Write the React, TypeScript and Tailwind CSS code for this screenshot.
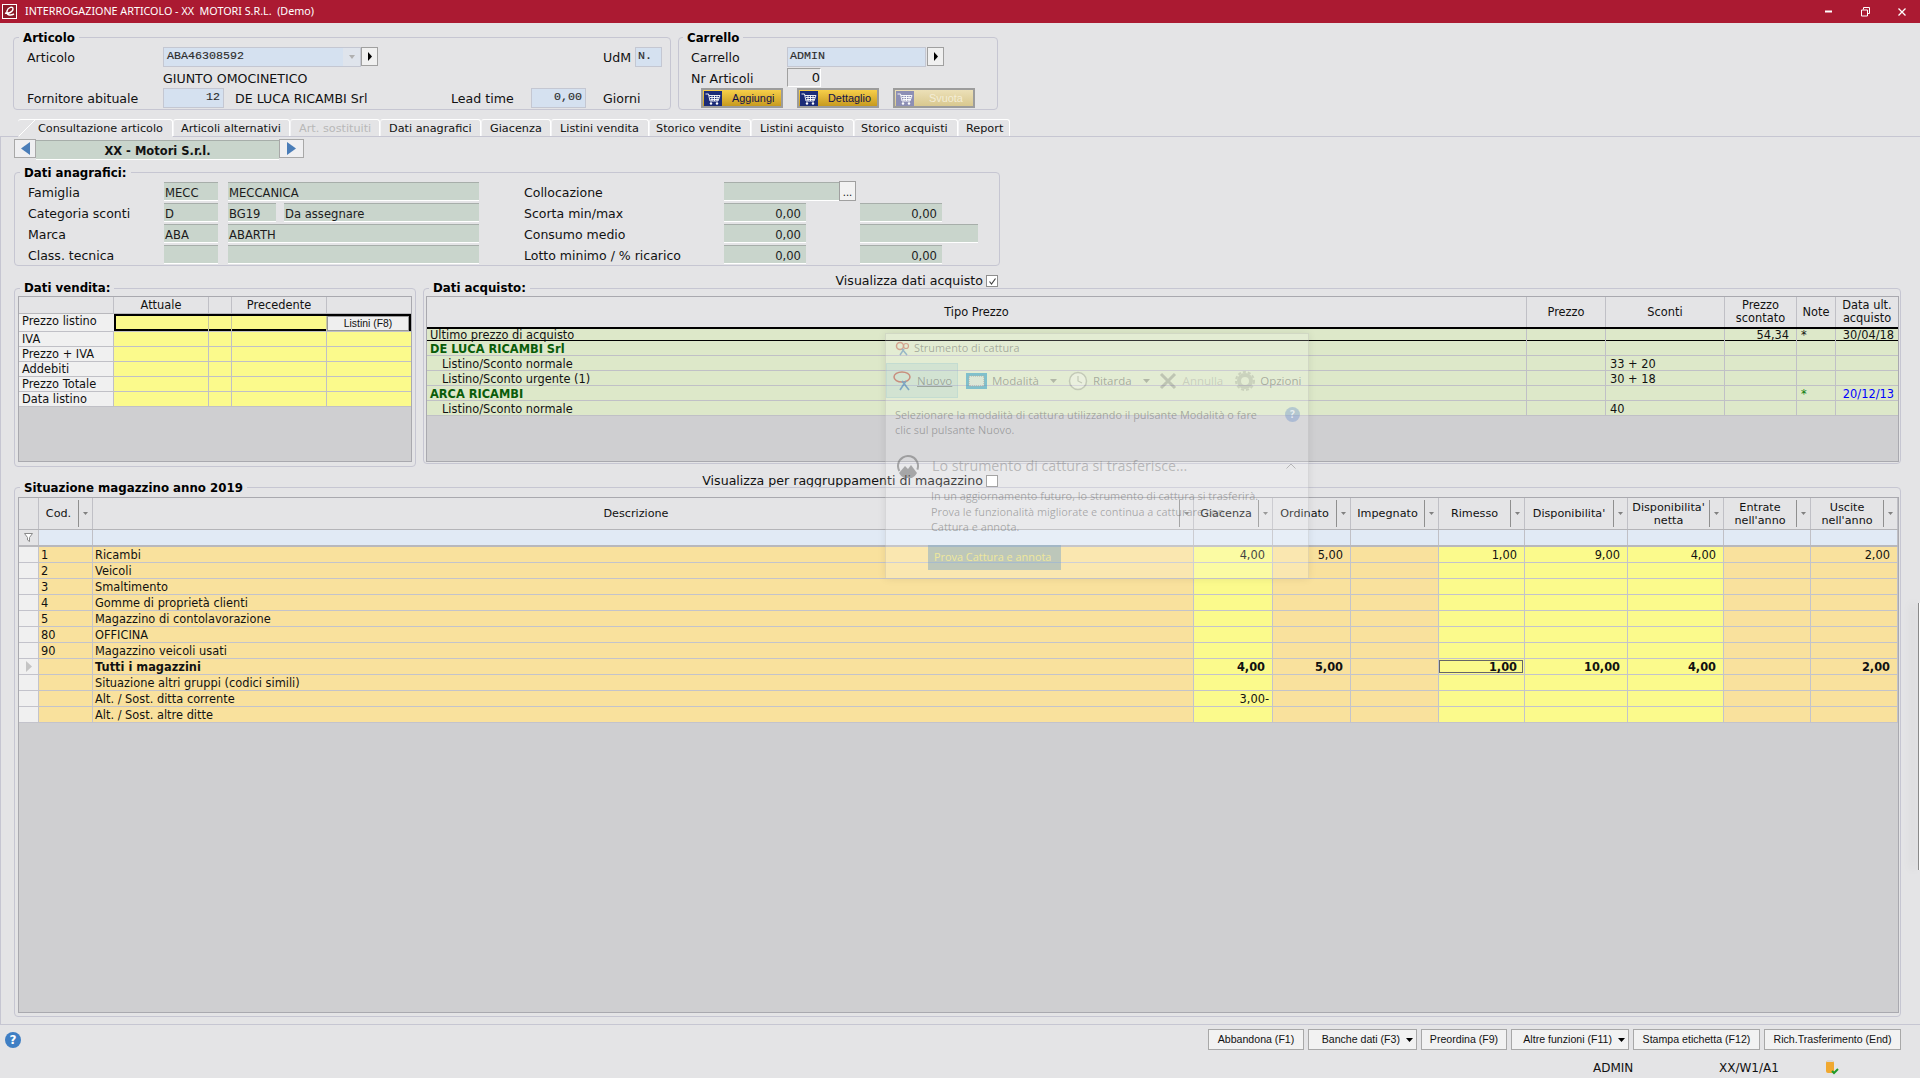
import React from "react";

function Group({ title, className, legend = "-top-[8px] left-[5px]", children }: { title: string; className: string; legend?: string; children?: React.ReactNode }) {
  return (
    <div className={`relative shrink-0 rounded-[4px] border border-[#c6c6d2] ${className}`}>
      <span className={`absolute ${legend} bg-[#e4e4e6] px-[4px] text-[11.8px] font-bold leading-[16px] text-black`}>{title}</span>
      {children}
    </div>
  );
}

function Mono({ w, children, right }: { w: string; children?: React.ReactNode; right?: boolean }) {
  return (
    <div className={`flex h-[20px] shrink-0 items-center border border-[#c4c7d2] bg-[#d5e1f0] px-[2px] font-['Liberation_Mono'] text-[11.67px] text-[#2a2a2a] [-webkit-text-stroke:0.15px_#333] ${w} ${right ? "justify-end pr-[3px]" : ""}`}>
      {children}
    </div>
  );
}

function Arrow() {
  return (
    <div className="flex h-[19px] w-[17px] shrink-0 items-center justify-center border border-[#a0a0a0] bg-[#f0f0f0]">
      <svg width="6" height="9" viewBox="0 0 6 9"><path d="M1 0l4 4.5L1 9z" fill="#000" /></svg>
    </div>
  );
}

function Cart({ faded }: { faded?: boolean }) {
  const c = faded ? "#8d8fb5" : "#1c2c78";
  return (
    <svg width="18" height="15" viewBox="0 0 18 15" className="ml-[1px] shrink-0">
      <rect x="0" y="0" width="18" height="15" fill={c} />
      <path d="M1.5 3h3l1.5 7h8l2-5.5H5M6 6.5h9M6.5 8.5h8M8 4.5v5.5M10.5 4.5v5.5M13 4.5v5.5" stroke="#fff" strokeWidth="0.9" fill="none" />
      <circle cx="7" cy="12.5" r="1.2" fill="#fff" />
      <circle cx="13" cy="12.5" r="1.2" fill="#fff" />
    </svg>
  );
}

function CartBtn({ label, disabled }: { label: string; disabled?: boolean }) {
  return (
    <div className={`flex h-[20px] w-[82px] shrink-0 items-center border-2 border-[#9c9c9c] font-['Liberation_Sans'] text-[10.9px] ${disabled ? "bg-gradient-to-b from-[#ece0b8] to-[#d9c88f] text-[#f4edd6]" : "bg-gradient-to-b from-[#f7cf49] to-[#c79a1e] text-[#10104a]"}`}>
      <Cart faded={disabled} />
      <span className={disabled ? "ml-[15px]" : "ml-[10px]"}>{label}</span>
    </div>
  );
}

function Ana({ w, children, right }: { w: string; children?: React.ReactNode; right?: boolean }) {
  return (
    <div className={`flex h-[19px] shrink-0 items-center border-t border-b border-t-[#a7aeaa] border-b-white bg-[#c9d5cc] px-[1px] pt-[2px] text-[11.6px] leading-[14px] text-[#1c1c1c] ${w} ${right ? "justify-end pr-[5px]" : ""}`}>
      {children}
    </div>
  );
}

function AnaRow({ label, label2, children }: { label: string; label2: string; children: React.ReactNode[] }) {
  return (
    <div className="flex h-[21px] items-start pl-[13px]">
      <span className="w-[136px] shrink-0 text-[12.5px] leading-[21px]">{label}</span>
      {children[0]}
      <span className="ml-[45px] w-[200px] shrink-0 text-[12.5px] leading-[21px]">{label2}</span>
      {children[1]}
    </div>
  );
}

function Check({ checked }: { checked?: boolean }) {
  return (
    <div className="ml-[3px] flex h-[12px] w-[12px] shrink-0 items-center justify-center border border-[#8e8e8e] bg-white">
      {checked && <svg width="9" height="9" viewBox="0 0 9 9"><path d="M1.5 4.5l2 2.5L7.5 1.5" stroke="#444" strokeWidth="1.2" fill="none" /></svg>}
    </div>
  );
}

const tabs: [string, string, string?][] = [
  ["Consultazione articolo", "w-[155px] pl-[20px]"],
  ["Articoli alternativi", "w-[117px] pl-[7px]"],
  ["Art. sostituiti", "w-[90px] pl-[8px]", "off"],
  ["Dati anagrafici", "w-[101px] pl-[8px]"],
  ["Giacenza", "w-[70px] pl-[8px]"],
  ["Listini vendita", "w-[98px] pl-[8px]"],
  ["Storico vendite", "w-[102px] pl-[6px]"],
  ["Listini acquisto", "w-[103px] pl-[8px]"],
  ["Storico acquisti", "w-[104px] pl-[6px]"],
  ["Report", "w-[52px] pl-[7px]"],
];

const venditaRows = ["IVA", "Prezzo + IVA", "Addebiti", "Prezzo Totale", "Data listino"];

const acqCols = "grid grid-cols-[1100px_79px_119px_72px_39px_62px] leading-[13px]";
const acqRows: { t: string; kind: string; sc?: string; star?: boolean; date?: string }[] = [
  { t: "DE LUCA RICAMBI Srl", kind: "head" },
  { t: "Listino/Sconto normale", kind: "sub", sc: "33 + 20" },
  { t: "Listino/Sconto urgente (1)", kind: "sub", sc: "30 + 18" },
  { t: "ARCA RICAMBI", kind: "head", star: true, date: "20/12/13" },
  { t: "Listino/Sconto normale", kind: "sub", sc: "40" },
];

const magCols = "grid grid-cols-[20px_54px_1101px_79px_78px_88px_86px_103px_96px_87px_87px] leading-[14px]";
const magHead: [string, string?][] = [
  ["Giacenza"], ["Ordinato"], ["Impegnato"], ["Rimesso"], ["Disponibilita'"], ["Disponibilita'", "netta"], ["Entrate", "nell'anno"], ["Uscite", "nell'anno"],
];
const yellow = [true, false, false, true, true, true, false, false];
const e = ["", "", "", "", "", "", "", ""];
const magRows: { c: string; d: string; v: string[]; b?: boolean }[] = [
  { c: "1", d: "Ricambi", v: ["4,00", "5,00", "", "1,00", "9,00", "4,00", "", "2,00"] },
  { c: "2", d: "Veicoli", v: e },
  { c: "3", d: "Smaltimento", v: e },
  { c: "4", d: "Gomme di proprietà clienti", v: e },
  { c: "5", d: "Magazzino di contolavorazione", v: e },
  { c: "80", d: "OFFICINA", v: e },
  { c: "90", d: "Magazzino veicoli usati", v: e },
  { c: "", d: "Tutti i magazzini", v: ["4,00", "5,00", "", "1,00", "10,00", "4,00", "", "2,00"], b: true },
  { c: "", d: "Situazione altri gruppi (codici simili)", v: e },
  { c: "", d: "Alt. / Sost. ditta corrente", v: ["3,00-", "", "", "", "", "", "", ""] },
  { c: "", d: "Alt. / Sost. altre ditte", v: e },
];

function Drop() {
  return <svg width="5" height="3" viewBox="0 0 5 3" className="shrink-0"><path d="M0 0h5L2.5 3z" fill="#808080" /></svg>;
}

function MagHead({ l1, l2 }: { l1: string; l2?: string }) {
  return (
    <div className="flex items-stretch border-r border-[#c0c0c6]">
      <div className="flex flex-1 flex-col items-center justify-center text-[11.2px] leading-[13px]">
        <span>{l1}</span>
        {l2 && <span>{l2}</span>}
      </div>
      <div className="my-[2px] w-px bg-[#8f8f8f]" />
      <div className="flex w-[13px] items-center justify-center"><Drop /></div>
    </div>
  );
}

const bottomBtns: [string, string, boolean?][] = [
  ["Abbandona (F1)", "w-[96px] justify-center"],
  ["Banche dati (F3)", "w-[109px] justify-end pr-[3px]", true],
  ["Preordina (F9)", "w-[86px] justify-center"],
  ["Altre funzioni (F11)", "w-[118px] justify-end pr-[3px]", true],
  ["Stampa etichetta (F12)", "w-[127px] justify-center"],
  ["Rich.Trasferimento (End)", "w-[137px] justify-center"],
];

function Snip() {
  const t = "text-[#5a5a5a]/45";
  return (
    <div className="absolute left-[885px] top-[333px] flex h-[246px] w-[424px] flex-col border border-[#8a8a8a]/20 bg-white/20 font-['Open_Sans'] text-[10.9px] shadow-[0_0_8px_rgba(0,0,0,0.08)]">
      <div className={`flex h-[29px] shrink-0 items-center pl-[9px] ${t}`}>
        <svg width="16" height="16" viewBox="0 0 16 16" className="opacity-40">
          <circle cx="5" cy="5" r="3.5" fill="none" stroke="#c0392b" strokeWidth="1.5" />
          <circle cx="11" cy="5" r="2.5" fill="none" stroke="#c0392b" strokeWidth="1.2" />
          <path d="M7 8l5 6M9 8l-4 6" stroke="#2d6cb5" strokeWidth="1.5" />
        </svg>
        <span className="ml-[3px]">Strumento di cattura</span>
      </div>
      <div className="flex h-[35px] shrink-0 items-center text-[11.5px]">
        <div className={`flex h-[35px] w-[72px] items-center border border-[#6fb5d0]/15 bg-[#6fb5d0]/15 pl-[5px] ${t}`}>
          <svg width="24" height="22" viewBox="0 0 24 22" className="opacity-50">
            <ellipse cx="10" cy="7" rx="8" ry="5" fill="none" stroke="#c0392b" strokeWidth="1.5" />
            <path d="M10 11l7 9M14 11l-6 9" stroke="#2d6cb5" strokeWidth="1.6" />
          </svg>
          <span className="ml-[1px] underline">Nuovo</span>
        </div>
        <svg width="21" height="16" viewBox="0 0 21 16" className="ml-[8px] opacity-60">
          <rect width="21" height="16" fill="#3fa3c8" />
          <rect x="3" y="3" width="15" height="10" fill="#d8e4d8" stroke="#888" strokeDasharray="1 1" />
        </svg>
        <span className={`ml-[5px] ${t}`}>Modalità</span>
        <span className="ml-[11px] opacity-30"><svg width="7" height="4" viewBox="0 0 7 4"><path d="M0 0h7L3.5 4z" fill="#444" /></svg></span>
        <svg width="20" height="20" viewBox="0 0 20 20" className="ml-[11px] opacity-25">
          <circle cx="10" cy="10" r="8.5" fill="#fff" stroke="#666" strokeWidth="1.5" />
          <path d="M10 5v5l4 2" stroke="#666" strokeWidth="1.2" fill="none" />
        </svg>
        <span className={`ml-[5px] ${t}`}>Ritarda</span>
        <span className="ml-[11px] opacity-30"><svg width="7" height="4" viewBox="0 0 7 4"><path d="M0 0h7L3.5 4z" fill="#444" /></svg></span>
        <svg width="18" height="18" viewBox="0 0 18 18" className="ml-[9px] opacity-25">
          <path d="M2 2l14 14M16 2L2 16" stroke="#555" strokeWidth="3" />
        </svg>
        <span className="ml-[6px] text-[#8a8a8a]/30">Annulla</span>
        <svg width="20" height="20" viewBox="0 0 20 20" className="ml-[12px] opacity-15">
          <circle cx="10" cy="10" r="6" fill="none" stroke="#444" strokeWidth="4" />
          <circle cx="10" cy="10" r="9" fill="none" stroke="#444" strokeWidth="2" strokeDasharray="3 2" />
        </svg>
        <span className={`ml-[5px] ${t}`}>Opzioni</span>
      </div>
      <div className={`mt-[9px] flex h-[31px] shrink-0 items-start pl-[9px] pr-[8px] leading-[15px] ${t}`}>
        <div className="flex-1">
          <div>Selezionare la modalità di cattura utilizzando il pulsante Modalità o fare</div>
          <div>clic sul pulsante Nuovo.</div>
        </div>
        <div className="flex h-[15px] w-[15px] shrink-0 items-center justify-center rounded-full bg-[#5b86c8]/35 text-[10px] font-bold text-white/70">?</div>
      </div>
      <div className="mt-[15px] flex h-[25px] shrink-0 items-center pl-[11px] pr-[12px]">
        <svg width="22" height="24" viewBox="0 0 22 24" className="opacity-50">
          <circle cx="11" cy="12" r="10" fill="none" stroke="#666" strokeWidth="2" strokeDasharray="40 23" transform="rotate(150 11 12)" />
          <path d="M2 19l6-7 3 3 3-4 6 8a10 10 0 0 1-18 0z" fill="#666" />
        </svg>
        <span className="ml-[13px] flex-1 text-[14.25px] text-[#6a6a6a]/40">Lo strumento di cattura si trasferisce...</span>
        <svg width="10" height="6" viewBox="0 0 10 6" className="opacity-30"><path d="M0.5 5.5L5 1l4.5 4.5" fill="none" stroke="#444" /></svg>
      </div>
      <div className={`mt-[10px] shrink-0 pl-[45px] leading-[15.5px] ${t}`}>
        <div>In un aggiornamento futuro, lo strumento di cattura si trasferirà.</div>
        <div>Prova le funzionalità migliorate e continua a catturare con</div>
        <div>Cattura e annota.</div>
      </div>
      <div className="ml-[42px] mt-[10px] flex h-[25px] w-[133px] shrink-0 items-center bg-[#7fa8c4]/50 pl-[6px] text-[#efe79c]">Prova Cattura e annota</div>
    </div>
  );
}

export default function App() {
  return (
    <div className="relative flex h-[1078px] w-[1920px] flex-col overflow-hidden bg-[#e4e4e6] font-['DejaVu_Sans',sans-serif] text-[#111]">
      {/* Title bar */}
      <div className="flex h-[23px] shrink-0 items-center bg-[#ab1a32] text-white">
        <svg width="15" height="15" viewBox="0 0 15 15" className="ml-[2px]">
          <rect x="0.5" y="0.5" width="14" height="14" fill="#8c1a28" stroke="#fff" />
          <path d="M3 9c3 1 8-1 8-4S6 3 5 7s3 5 7 3" fill="none" stroke="#fff" strokeWidth="1.4" />
        </svg>
        <span className="ml-[8px] whitespace-pre font-['Noto_Sans'] text-[10.75px]">INTERROGAZIONE ARTICOLO - XX  MOTORI S.R.L.  (Demo)</span>
        <div className="ml-auto flex items-center">
          <svg width="7" height="3" viewBox="0 0 7 3"><rect width="7" height="2" y="0.5" fill="#fff" /></svg>
          <svg width="9" height="10" viewBox="0 0 9 10" className="ml-[29px]">
            <path d="M2.5 2.5V0.5h6v6H6.5M0.5 3h6v6h-6z" fill="none" stroke="#fff" />
          </svg>
          <svg width="8" height="8" viewBox="0 0 8 8" className="ml-[28px] mr-[14px]">
            <path d="M0.5 0.5l7 7M7.5 0.5l-7 7" stroke="#fff" strokeWidth="1.3" />
          </svg>
        </div>
      </div>

      {/* Header groups */}
      <div className="mt-[14px] flex shrink-0 pl-[13px] text-[12.6px]">
        <Group title="Articolo" className="h-[73px] w-[658px]">
          <div className="flex h-[30px] items-start pl-[13px] pt-[9px]">
            <span className="w-[136px] pt-[1px] leading-[20px]">Articolo</span>
            <div className="flex h-[20px] w-[198px] items-stretch border border-[#c4c7d2]">
              <span className="flex flex-1 items-center bg-[#d5e1f0] pl-[3px] font-['Liberation_Mono'] text-[11.67px] text-[#2a2a2a] [-webkit-text-stroke:0.15px_#333]">ABA46308592</span>
              <span className="flex w-[17px] items-center justify-center bg-[#dfe4ec]"><svg width="6" height="4" viewBox="0 0 6 4"><path d="M0 0h6L3 4z" fill="#b0b0b0" /></svg></span>
            </div>
            <Arrow />
            <span className="ml-[225px] w-[32px] pt-[1px] leading-[20px]">UdM</span>
            <Mono w="w-[27px]">N.</Mono>
          </div>
          <div className="flex h-[20px] items-start pl-[149px]">
            <span className="pt-[1px] leading-[20px]">GIUNTO OMOCINETICO</span>
          </div>
          <div className="flex h-[20px] items-start pl-[13px]">
            <span className="w-[136px] pt-[1px] leading-[20px]">Fornitore abituale</span>
            <Mono w="w-[61px]" right>12</Mono>
            <span className="ml-[11px] w-[216px] pt-[1px] leading-[20px]">DE LUCA RICAMBI Srl</span>
            <span className="w-[80px] pt-[1px] leading-[20px]">Lead time</span>
            <Mono w="w-[55px]" right>0,00</Mono>
            <span className="ml-[17px] pt-[1px] leading-[20px]">Giorni</span>
          </div>
        </Group>
        <Group title="Carrello" legend="-top-[8px] left-[4px]" className="ml-[7px] h-[73px] w-[320px]">
          <div className="flex h-[30px] items-start pl-[12px] pt-[9px]">
            <span className="w-[96px] pt-[1px] leading-[20px]">Carrello</span>
            <Mono w="w-[139px]">ADMIN</Mono>
            <div className="ml-[1px]"><Arrow /></div>
          </div>
          <div className="flex h-[20px] items-start pl-[12px]">
            <span className="w-[96px] pt-[1px] leading-[20px]">Nr Articoli</span>
            <div className="flex h-[19px] w-[34px] items-center justify-end border border-t-[#a0a0a0] border-l-[#a0a0a0] border-r-white border-b-white text-[13px] leading-[16px]">0</div>
          </div>
          <div className="flex gap-[14px] pl-[22px]">
            <CartBtn label="Aggiungi" />
            <CartBtn label="Dettaglio" />
            <CartBtn label="Svuota" disabled />
          </div>
        </Group>
      </div>

      {/* Tabs */}
      <div className="mt-[9px] flex h-[17px] shrink-0 pl-[18px] text-[11.25px]">
        {tabs.map(([t, cls, off], i) => (
          <div key={t} className={`relative flex items-center rounded-t-[3px] border-t border-r border-white pt-[2px] ${cls} ${off ? "text-[#b8b8b8]" : ""} ${i === 0 ? "" : "border-l border-l-[#f4f4f6]"}`}>
            {i === 0 && (
              <svg width="18" height="18" viewBox="0 0 18 18" className="absolute left-0 -top-[1px]">
                <path d="M0 18L17 1" stroke="#fff" strokeWidth="1" />
              </svg>
            )}
            {t}
          </div>
        ))}
      </div>

      {/* Tab page */}
      <div className="relative flex h-[889px] shrink-0 flex-col border-t border-b border-l border-[#c6c6d2]">
        {/* hide line under active tab */}
        <div className="absolute -top-px left-[17px] h-px w-[155px] bg-[#e4e4e6]" />

        <div className="mt-[2px] flex shrink-0 pl-[13px]">
          <div className="flex h-[19px] w-[22px] items-center justify-center border border-[#a8a8a8] bg-[#efeff1]">
            <svg width="9" height="13" viewBox="0 0 9 13"><path d="M9 0v13L0 6.5z" fill="#4a7db8" /></svg>
          </div>
          <div className="mt-[1px] flex h-[20px] w-[243px] items-center justify-center border-t border-b border-t-[#a7aeaa] border-b-white bg-[#c9d5cc] pt-[2px] text-[11.5px] font-bold leading-[14px]">XX - Motori S.r.l.</div>
          <div className="flex h-[19px] w-[25px] items-center justify-center border border-[#a8a8a8] bg-[#efeff1]">
            <svg width="9" height="13" viewBox="0 0 9 13"><path d="M0 0v13l9-6.5z" fill="#4a7db8" /></svg>
          </div>
        </div>

        <Group title="Dati anagrafici:" className="ml-[13px] mt-[12px] h-[94px] w-[986px]">
          <div className="pt-[9px]">
            <AnaRow label="Famiglia" label2="Collocazione">
              {[
                <React.Fragment key="a"><Ana w="w-[54px]">MECC</Ana><div className="ml-[10px]"><Ana w="w-[251px]">MECCANICA</Ana></div></React.Fragment>,
                <React.Fragment key="b"><Ana w="w-[115px]" />
                  <div className="-mt-[1px] flex h-[20px] w-[17px] items-end justify-center border border-[#a0a0a0] bg-[#f2f2f2] pb-[2px] text-[10px] leading-[10px]">...</div></React.Fragment>,
              ]}
            </AnaRow>
            <AnaRow label="Categoria sconti" label2="Scorta min/max">
              {[
                <React.Fragment key="a"><Ana w="w-[54px]">D</Ana><div className="ml-[10px]"><Ana w="w-[48px]">BG19</Ana></div><div className="ml-[8px]"><Ana w="w-[195px]">Da assegnare</Ana></div></React.Fragment>,
                <React.Fragment key="b"><Ana w="w-[82px]" right>0,00</Ana><div className="ml-[54px]"><Ana w="w-[82px]" right>0,00</Ana></div></React.Fragment>,
              ]}
            </AnaRow>
            <AnaRow label="Marca" label2="Consumo medio">
              {[
                <React.Fragment key="a"><Ana w="w-[54px]">ABA</Ana><div className="ml-[10px]"><Ana w="w-[251px]">ABARTH</Ana></div></React.Fragment>,
                <React.Fragment key="b"><Ana w="w-[82px]" right>0,00</Ana><div className="ml-[54px]"><Ana w="w-[118px]" /></div></React.Fragment>,
              ]}
            </AnaRow>
            <AnaRow label="Class. tecnica" label2="Lotto minimo / % ricarico">
              {[
                <React.Fragment key="a"><Ana w="w-[54px]" /><div className="ml-[10px]"><Ana w="w-[251px]" /></div></React.Fragment>,
                <React.Fragment key="b"><Ana w="w-[82px]" right>0,00</Ana><div className="ml-[54px]"><Ana w="w-[82px]" right>0,00</Ana></div></React.Fragment>,
              ]}
            </AnaRow>
          </div>
        </Group>

        <div className="mt-[8px] flex h-[14px] w-[997px] shrink-0 items-center justify-end text-[12.6px]">
          <span>Visualizza dati acquisto</span>
          <Check checked />
        </div>

        <div className="flex shrink-0 items-start pl-[13px] text-[11.4px]">
          <Group title="Dati vendita:" legend="-top-[9px] left-[5px]" className="h-[179px] w-[402px]">
            <div className="ml-[3px] mt-[7px] h-[166px] w-[394px] border border-[#a9a9af] bg-[#cfcfd1] leading-[13px]">
              <div className="grid h-[17px] grid-cols-[95px_95px_23px_95px_84px] border-b border-[#b9b9bd] bg-[#e4e4e6]">
                <div className="border-r border-[#c0c0c6]" />
                <div className="flex items-center justify-center border-r border-[#c0c0c6] pt-[1px]">Attuale</div>
                <div className="border-r border-[#c0c0c6]" />
                <div className="flex items-center justify-center border-r border-[#c0c0c6] pt-[1px]">Precedente</div>
                <div />
              </div>
              <div className="flex h-[18px] border-b border-[#c0c0c6]">
                <div className="flex w-[95px] shrink-0 items-start bg-[#f0f0f0] pl-[3px] leading-[15px]">Prezzo listino</div>
                <div className="grid flex-1 grid-cols-[93px_23px_95px_1fr] border-2 border-black bg-[#fbfa8c]">
                  <div className="border-r border-[#c8c8a0]" />
                  <div className="border-r border-[#c8c8a0]" />
                  <div className="border-r border-[#c8c8a0]" />
                  <div className="flex items-center justify-center border border-[#9a9a9a] bg-[#efefef] font-['Liberation_Sans'] text-[10.4px]">Listini (F8)</div>
                </div>
              </div>
              {venditaRows.map((r) => (
                <div key={r} className="grid h-[15px] grid-cols-[95px_95px_23px_95px_84px] border-b border-[#c0c0c6]">
                  <div className="flex items-center border-r border-[#c0c0c6] bg-[#f0f0f0] pl-[3px]">{r}</div>
                  <div className="border-r border-[#c0c0c6] bg-[#fbfa8c]" />
                  <div className="border-r border-[#c0c0c6] bg-[#fbfa8c]" />
                  <div className="border-r border-[#c0c0c6] bg-[#fbfa8c]" />
                  <div className="bg-[#fbfa8c]" />
                </div>
              ))}
            </div>
          </Group>
          <Group title="Dati acquisto:" legend="-top-[9px] left-[5px]" className="ml-[7px] h-[176px] w-[1478px]">
            <div className="ml-[2px] mt-[7px] h-[166px] w-[1473px] border border-[#a9a9af] bg-[#cfcfd1]">
              <div className={`${acqCols} h-[30px] bg-[#e4e4e6]`}>
                {["Tipo Prezzo", "Prezzo", "Sconti", "Prezzo scontato", "Note", "Data ult. acquisto"].map((h) => (
                  <div key={h} className="flex items-center justify-center border-r border-[#c0c0c6] px-[3px] text-center last:border-r-0">{h}</div>
                ))}
              </div>
              <div className={`${acqCols} h-[14px] border-t-2 border-b border-black bg-[#dde8c9]`}>
                <div className="flex items-center border-r border-[#c0c0c6] pl-[3px]">Ultimo prezzo di acquisto</div>
                <div className="border-r border-[#c0c0c6]" />
                <div className="border-r border-[#c0c0c6]" />
                <div className="flex items-center justify-end border-r border-[#c0c0c6] pr-[7px]">54,34</div>
                <div className="flex items-center border-r border-[#c0c0c6] pl-[4px]">*</div>
                <div className="flex items-center justify-end pr-[4px]">30/04/18</div>
              </div>
              {acqRows.map((r, i) => (
                <div key={i} className={`${acqCols} h-[15px] border-b border-[#c0c0c6] bg-[#dde8c9]`}>
                  <div className={`flex items-center border-r border-[#c0c0c6] pt-[2px] ${r.kind === "head" ? "pl-[3px] font-bold text-[#0a5c0a]" : "pl-[15px]"}`}>{r.t}</div>
                  <div className="border-r border-[#c0c0c6]" />
                  <div className="flex items-center border-r border-[#c0c0c6] pl-[4px] pt-[2px]">{r.sc}</div>
                  <div className="border-r border-[#c0c0c6]" />
                  <div className="flex items-center border-r border-[#c0c0c6] pl-[4px] pt-[2px] text-[#0a7a0a]">{r.star ? "*" : ""}</div>
                  <div className="flex items-center justify-end pr-[4px] pt-[2px] text-[#0000ff]">{r.date}</div>
                </div>
              ))}
            </div>
          </Group>
        </div>

        <div className="mt-[8px] flex h-[12px] w-[997px] shrink-0 items-center justify-end text-[12.6px]">
          <span className="pt-[1px]">Visualizza per raggruppamenti di magazzino</span>
          <Check />
        </div>

        <Group title="Situazione magazzino anno 2019" className="ml-[13px] h-[530px] w-[1887px] text-[11.4px]">
          <div className="ml-[3px] mt-[9px] h-[516px] w-[1881px] border border-[#a9a9af] bg-[#cfcfd1]">
            <div className={`${magCols} h-[32px] border-b border-[#b4b4b8] bg-[#e4e4e6]`}>
              <div className="border-r border-[#c0c0c6]" />
              <MagHead l1="Cod." />
              <MagHead l1="Descrizione" />
              {magHead.map(([a, b], i) => <MagHead key={i} l1={a} l2={b} />)}
            </div>
            <div className={`${magCols} h-[17px] border-b-2 border-[#b8b8bc] bg-[#e1eaf5]`}>
              <div className="flex items-center justify-center border-r border-[#c0c0c6] bg-[#e4e4e6]">
                <svg width="9" height="9" viewBox="0 0 9 9"><path d="M0.5 0.5h8L5.5 4.5V8.5L3.5 7V4.5z" fill="#fff" stroke="#8a8a8a" /></svg>
              </div>
              {Array.from({ length: 10 }).map((_, i) => <div key={i} className="border-r border-[#c0c0c6]" />)}
            </div>
            {magRows.map((r, ri) => (
              <div key={ri} className={`${magCols} h-[16px] border-b border-[#c3c3cb] ${r.b ? "font-bold" : ""}`}>
                <div className="flex items-center justify-center border-r border-[#c3c3cb] bg-[#f0f0f0]">
                  {r.b && <svg width="6" height="11" viewBox="0 0 6 11"><path d="M0 0l6 5.5L0 11z" fill="#c4c4c4" /></svg>}
                </div>
                <div className="flex items-center border-r border-[#c3c3cb] bg-[#f9e19d] pl-[2px]">{r.c}</div>
                <div className="flex items-center border-r border-[#c3c3cb] bg-[#f9e19d] pl-[2px]">{r.d}</div>
                {r.v.map((v, i) => {
                  const focus = r.b && i === 3;
                  return (
                    <div key={i} className={`flex items-center justify-end border-r border-[#c3c3cb] ${v === "3,00-" ? "pr-[3px]" : "pr-[7px]"} ${yellow[i] ? "bg-[#fbfa8c]" : "bg-[#f9e19d]"}`}>
                      {focus ? (
                        <div className="-mr-[6px] flex h-[13px] w-[84px] items-center justify-end border border-[#666] pr-[5px] pt-[2px] leading-[11px]">{v}</div>
                      ) : v}
                    </div>
                  );
                })}
              </div>
            ))}
          </div>
        </Group>
      </div>

      {/* Bottom buttons */}
      <div className="mt-[4px] flex h-[21px] shrink-0 items-center pl-[5px] pr-[19px]">
        <div className="flex h-[16px] w-[16px] items-center justify-center rounded-full bg-[#3f7fc4] text-[12px] font-bold text-white">?</div>
        <div className="ml-auto flex gap-[4px]">
          {bottomBtns.map(([t, w, drop]) => (
            <div key={t} className={`flex h-[21px] items-center whitespace-nowrap border border-[#a8a8a8] bg-[#f2f2f2] font-['Liberation_Sans'] text-[10.6px] ${w}`}>
              {t}
              {drop && <svg width="7" height="4" viewBox="0 0 7 4" className="ml-[6px]"><path d="M0 0h7L3.5 4z" fill="#000" /></svg>}
            </div>
          ))}
        </div>
      </div>

      {/* Status bar */}
      <div className="mt-[10px] flex h-[15px] shrink-0 items-center pl-[1593px] text-[12px]">
        <span className="w-[126px]">ADMIN</span>
        <span className="w-[106px]">XX/W1/A1</span>
        <svg width="15" height="15" viewBox="0 0 15 15">
          <rect x="1" y="1" width="8" height="12" rx="2" fill="#f0a830" />
          <rect x="2" y="0" width="6" height="2" fill="#d8d8d8" />
          <path d="M7 11l2 2 4-4" fill="none" stroke="#1f9a2a" strokeWidth="2" />
        </svg>
      </div>

      <Snip />
      {/* edge of another window peeking in at the right */}
      <div className="absolute left-[1918px] top-[603px] h-[267px] w-[2px] border-l border-[#8a8a8a] bg-white shadow-[-6px_0_10px_rgba(0,0,0,0.12)]" />
    </div>
  );
}
